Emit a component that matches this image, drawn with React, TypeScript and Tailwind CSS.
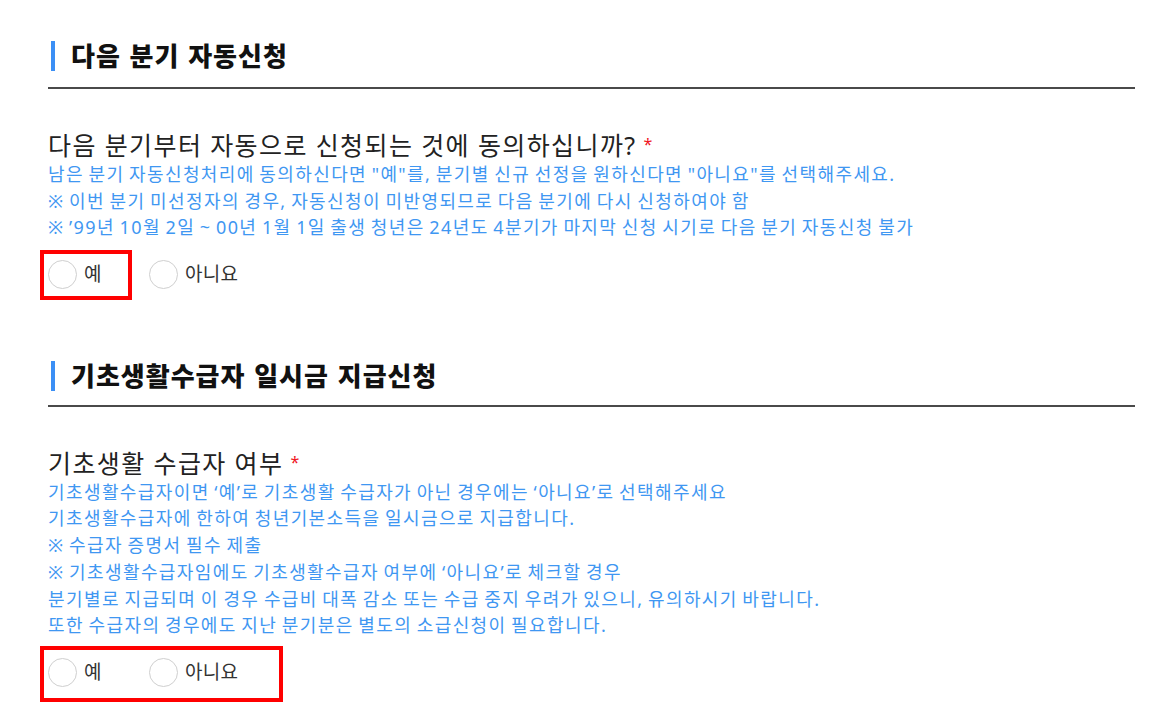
const KR = { fontFamily: '"Noto Sans", "Noto Sans CJK KR", sans-serif' };

function SectionTitle({ children }: { children: React.ReactNode }) {
  return (
    <div className="flex h-[30px] items-center pl-[3px]">
      <span className="h-[30px] w-[4px] bg-[#3b8ff5]" />
      <h2 className="ml-[16px] text-[26px] font-black leading-[30px] tracking-[1px] [word-spacing:1px] text-[#111]">
        {children}
      </h2>
    </div>
  );
}

function Radio({ label, width }: { label: string; width?: string }) {
  return (
    <label className={`flex items-center gap-[7px] ${width ?? ""}`}>
      <span className="h-[29px] w-[29px] rounded-full border-[1.5px] border-[#cfcfcf] bg-white" />
      <span className="text-[19px] leading-none tracking-[0.3px] text-[#333]">{label}</span>
    </label>
  );
}

function Question({ children }: { children: React.ReactNode }) {
  return (
    <p className="h-[32px] text-[25px] leading-[32px] tracking-[1.4px] text-[#222]">
      {children}
      <span className="relative top-[-5px] ml-[7px] text-[16px] text-[#f0141e]">*</span>
    </p>
  );
}

export default function App() {
  return (
    <div className="min-h-screen bg-white" style={KR}>
      <div className="w-[1135px] pl-[48px] pt-[41px]">
        <SectionTitle>다음 분기 자동신청</SectionTitle>
        <div className="mt-[16px] h-[2px] bg-[#4a4a4a]" />

        <div className="mt-[40px]">
          <Question>다음 분기부터 자동으로 신청되는 것에 동의하십니까?</Question>
          <div className="text-[18px] leading-[26.5px] tracking-[1.4px] [word-spacing:-1.5px] text-[#3f97f2]">
            <p>남은 분기 자동신청처리에 동의하신다면 "예"를, 분기별 신규 선정을 원하신다면 "아니요"를 선택해주세요.</p>
            <p>※ 이번 분기 미선정자의 경우, 자동신청이 미반영되므로 다음 분기에 다시 신청하여야 함</p>
            <p>※ ’99년 10월 2일 ~ 00년 1월 1일 출생 청년은 24년도 4분기가 마지막 신청 시기로 다음 분기 자동신청 불가</p>
          </div>
          <div className="relative mt-[9px] flex h-[50px] items-center">
            <Radio label="예" width="w-[101px]" />
            <Radio label="아니요" />
            <div className="absolute left-[-8px] top-0 h-[50px] w-[92px] border-[4px] border-[#ff0000]" />
          </div>
        </div>

        <div className="mt-[61px]">
          <SectionTitle>기초생활수급자 일시금 지급신청</SectionTitle>
        </div>
        <div className="mt-[14px] h-[2px] bg-[#4a4a4a]" />

        <div className="mt-[40px]">
          <Question>기초생활 수급자 여부</Question>
          <div className="text-[18px] leading-[26.8px] tracking-[1.4px] [word-spacing:-1.5px] text-[#3f97f2]">
            <p>기초생활수급자이면 ‘예’로 기초생활 수급자가 아닌 경우에는 ‘아니요’로 선택해주세요</p>
            <p>기초생활수급자에 한하여 청년기본소득을 일시금으로 지급합니다.</p>
            <p>※ 수급자 증명서 필수 제출</p>
            <p>※ 기초생활수급자임에도 기초생활수급자 여부에 ‘아니요’로 체크할 경우</p>
            <p>분기별로 지급되며 이 경우 수급비 대폭 감소 또는 수급 중지 우려가 있으니, 유의하시기 바랍니다.</p>
            <p>또한 수급자의 경우에도 지난 분기분은 별도의 소급신청이 필요합니다.</p>
          </div>
          <div className="relative mt-[8px] flex h-[50px] items-center">
            <Radio label="예" width="w-[101px]" />
            <Radio label="아니요" />
            <div className="absolute left-[-8px] top-[-1px] h-[56px] w-[243px] border-[4px] border-[#ff0000]" />
          </div>
        </div>
      </div>
    </div>
  );
}
